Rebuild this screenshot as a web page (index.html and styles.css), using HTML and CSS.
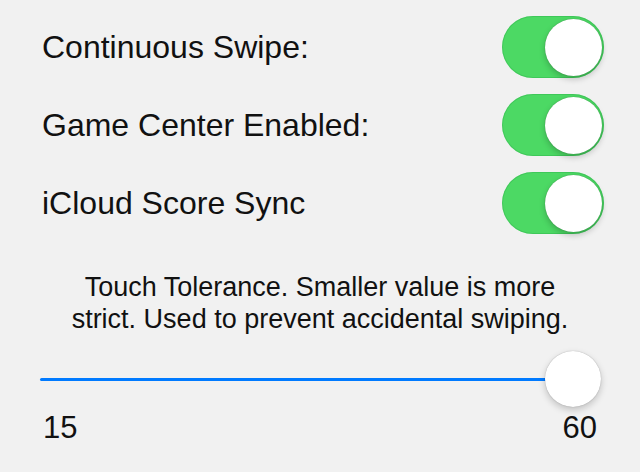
FILE: index.html
```html
<!DOCTYPE html>
<html>
<head>
<meta charset="utf-8">
<link rel="stylesheet" href="styles.css">
</head>
<body>
<main class="settings">
  <div class="row">
    <span class="label">Continuous Swipe:</span>
    <span class="switch"><span class="knob"></span></span>
  </div>
  <div class="row">
    <span class="label">Game Center Enabled:</span>
    <span class="switch"><span class="knob"></span></span>
  </div>
  <div class="row">
    <span class="label">iCloud Score Sync</span>
    <span class="switch"><span class="knob"></span></span>
  </div>
  <p class="note">Touch Tolerance. Smaller value is more<br>strict. Used to prevent accidental swiping.</p>
  <div class="slider">
    <span class="track"></span>
    <span class="thumb"></span>
  </div>
  <div class="range">
    <span>15</span>
    <span>60</span>
  </div>
</main>
</body>
</html>
```
FILE: styles.css
```css
html, body {
  margin: 0;
  padding: 0;
  background: #f1f1f1;
}
body {
  font-family: "Liberation Sans", Arial, sans-serif;
  color: #111;
  width: 640px;
  height: 472px;
  overflow: hidden;
}
.settings {
  display: flex;
  flex-direction: column;
  padding: 16px 36px 0 42px;
}
.row {
  display: flex;
  align-items: center;
  justify-content: space-between;
  height: 62px;
  margin-bottom: 16px;
}
.row:nth-child(3) {
  margin-bottom: 0;
}
.label {
  font-size: 32px;
  line-height: 36px;
}
.switch {
  width: 102px;
  height: 62px;
  border-radius: 31px;
  background: #4cd964;
  box-shadow: inset 0 0 0 1px rgba(40, 170, 70, 0.35);
  display: flex;
  align-items: center;
  justify-content: flex-end;
  padding: 0 2px;
  box-sizing: border-box;
}
.knob {
  width: 57px;
  height: 57px;
  border-radius: 50%;
  background: #fff;
  box-shadow: 0 3px 6px rgba(0, 0, 0, 0.22), 0 0 1px rgba(0, 0, 0, 0.35);
}
.note {
  margin: 37px 0 0 -42px;
  width: 640px;
  text-align: center;
  font-size: 27px;
  line-height: 32px;
  color: #111;
}
.slider {
  margin: 16px 3px 0 -2px;
  height: 56px;
  display: flex;
  align-items: center;
}
.track {
  flex: 1;
  height: 3px;
  border-radius: 2px;
  background: #007aff;
  margin-right: -2px;
}
.thumb {
  width: 56px;
  height: 56px;
  border-radius: 50%;
  background: #fff;
  box-shadow: 0 3px 7px rgba(0, 0, 0, 0.2), 0 0 1px rgba(0, 0, 0, 0.35);
}
.range {
  margin: 3px 7px 0 1px;
  display: flex;
  justify-content: space-between;
  font-size: 31px;
  line-height: 36px;
}
```
